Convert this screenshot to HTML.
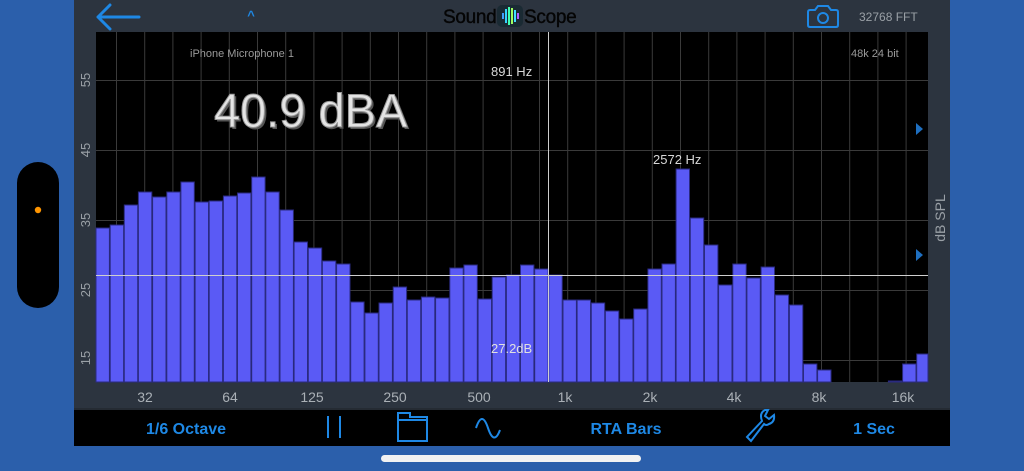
<!DOCTYPE html>
<html><head><meta charset="utf-8"><style>
html,body{margin:0;padding:0;width:1024px;height:471px;overflow:hidden;background:#2b5fab;}
svg{display:block}
text{font-family:"Liberation Sans",sans-serif}
</style></head><body>
<svg width="1024" height="471" viewBox="0 0 1024 471" xmlns="http://www.w3.org/2000/svg">
<rect width="1024" height="471" fill="#2b5fab"/>
<rect x="17" y="162" width="42" height="146" rx="21" fill="#000"/>
<circle cx="38" cy="210" r="3.2" fill="#ff9500"/>
<rect x="74" y="0" width="876" height="446" fill="#2c343f"/>
<rect x="74" y="410" width="876" height="36" fill="#000"/>
<rect x="74" y="408" width="876" height="2" fill="#252b33"/>
<rect x="381" y="455" width="260" height="7" rx="3.5" fill="#f2f2f2"/>
<path d="M98 17 H139 M110 5 L98 17 L110 29" stroke="#1e88e5" stroke-width="3" fill="none" stroke-linecap="round" stroke-linejoin="round"/>
<text x="251" y="20" font-size="13" fill="#1e88e5" text-anchor="middle" font-weight="bold">^</text>
<text x="443" y="23" font-size="19" fill="#050505" stroke="#050505" stroke-width="0.4" letter-spacing="-0.3">Sound</text>
<rect x="497" y="5" width="26" height="22" rx="5" fill="#1a2a33"/>
<g stroke-width="2">
<line x1="503" y1="13" x2="503" y2="19" stroke="#3fa0ff"/><line x1="506" y1="9" x2="506" y2="23" stroke="#35d0ff"/><line x1="509" y1="7" x2="509" y2="25" stroke="#40ffb0"/><line x1="512" y1="8" x2="512" y2="24" stroke="#a0ff60"/><line x1="515" y1="10" x2="515" y2="22" stroke="#40e0ff"/><line x1="518" y1="13" x2="518" y2="19" stroke="#b060ff"/>
</g>
<text x="524" y="23" font-size="19" fill="#050505" stroke="#050505" stroke-width="0.4" letter-spacing="-0.3">Scope</text>
<g stroke="#1e88e5" stroke-width="2" fill="none">
<path d="M810 10 H815 L818 6 H828 L831 10 H836 Q838 10 838 12 V25 Q838 27 836 27 H810 Q808 27 808 25 V12 Q808 10 810 10 Z"/>
<circle cx="823" cy="18" r="5"/>
</g>
<text x="859" y="21" font-size="12" fill="#9aa0a6">32768 FFT</text>
<rect x="96" y="32" width="832" height="350" fill="#000"/>
<g stroke="#3a3a3a" stroke-width="1" id="grid"></g>
<g id="bars" fill="#5a5af5" stroke="#2a2a80" stroke-width="1"></g>
<line x1="548.5" y1="32" x2="548.5" y2="382" stroke="#cfcfcf" stroke-width="1"/>
<line x1="96" y1="275.5" x2="928" y2="275.5" stroke="#cfcfcf" stroke-width="1"/>
<text x="190" y="57" font-size="11" fill="#9a9a9a">iPhone Microphone 1</text>
<text x="851" y="57" font-size="11" fill="#9a9a9a">48k 24 bit</text>
<text x="491" y="76" font-size="13" fill="#d8d8d8">891 Hz</text>
<text x="653" y="164" font-size="13" fill="#d8d8d8">2572 Hz</text>
<text x="491" y="353" font-size="13" fill="#e0e0e0">27.2dB</text>
<text x="216" y="129" font-size="47" fill="#555">40.9 dBA</text>
<text x="214" y="127" font-size="47" fill="#e4e4e4" stroke="#999" stroke-width="1">40.9 dBA</text>
<path d="M916 123 L923 129 L916 135 Z" fill="#1e6fc0"/>
<path d="M916 249 L923 255 L916 261 Z" fill="#1e6fc0"/>
<g font-size="13" fill="#9aa0a6" text-anchor="middle">
<text transform="translate(90,80) rotate(-90)">55</text>
<text transform="translate(90,150) rotate(-90)">45</text>
<text transform="translate(90,220) rotate(-90)">35</text>
<text transform="translate(90,290) rotate(-90)">25</text>
<text transform="translate(90,358) rotate(-90)">15</text>
<text transform="translate(945,218) rotate(-90)" font-size="14">dB SPL</text>
</g>
<g font-size="14" fill="#aab0b6" text-anchor="middle">
<text x="145" y="402">32</text><text x="230" y="402">64</text><text x="312" y="402">125</text>
<text x="395" y="402">250</text><text x="479" y="402">500</text><text x="565" y="402">1k</text>
<text x="650" y="402">2k</text><text x="734" y="402">4k</text><text x="819" y="402">8k</text>
<text x="903" y="402">16k</text>
</g>
<g font-size="16" font-weight="bold" fill="#1e88e5" text-anchor="middle">
<text x="186" y="434">1/6 Octave</text>
<text x="626" y="434">RTA Bars</text>
<text x="874" y="434">1 Sec</text>
</g>
<g stroke="#1e88e5" stroke-width="2" fill="none">
<line x1="328" y1="416" x2="328" y2="438"/><line x1="340" y1="416" x2="340" y2="438"/>
<path d="M398 441 V413 H410 V417 H427 V441 Z M398 420 H427"/>
<path d="M476 428 Q482 410 488 428 T500 430"/>
<path d="M751 441 L747 437 L762 421 Q759 413 765 410 L768 410 L765 416 L769 419 L774 415 Q775 422 769 424 Q766 426 764 424 Z"/>
</g>
</svg>
<script>
var g=document.getElementById('grid'),s='';
for(var x=116.5;x<928;x+=28.2){s+='<line x1="'+x.toFixed(1)+'" y1="32" x2="'+x.toFixed(1)+'" y2="382"/>';}
[80,150,220,290,360].forEach(function(y){s+='<line x1="96" y1="'+(y+.5)+'" x2="928" y2="'+(y+.5)+'"/>';});
g.innerHTML=s;
var t=[228,225,205,192,197,192,182,202,201,196,193,177,192,210,242,248,261,264,302,313,303,287,300,297,298,268,265,299,277,275,265,269,275,300,300,303,311,319,309,269,264,169,218,245,285,264,278,267,295,305,364,370,382,382,382,382,381,364,354];
var b='';
for(var i=0;i<t.length;i++){if(t[i]>=382)continue;var x=96+i*14.15;var w=Math.min(13.4,928-x);b+='<rect x="'+x.toFixed(1)+'" y="'+t[i]+'" width="'+w.toFixed(1)+'" height="'+(382-t[i])+'"/>';}
document.getElementById('bars').innerHTML=b;
</script>
</body></html>
